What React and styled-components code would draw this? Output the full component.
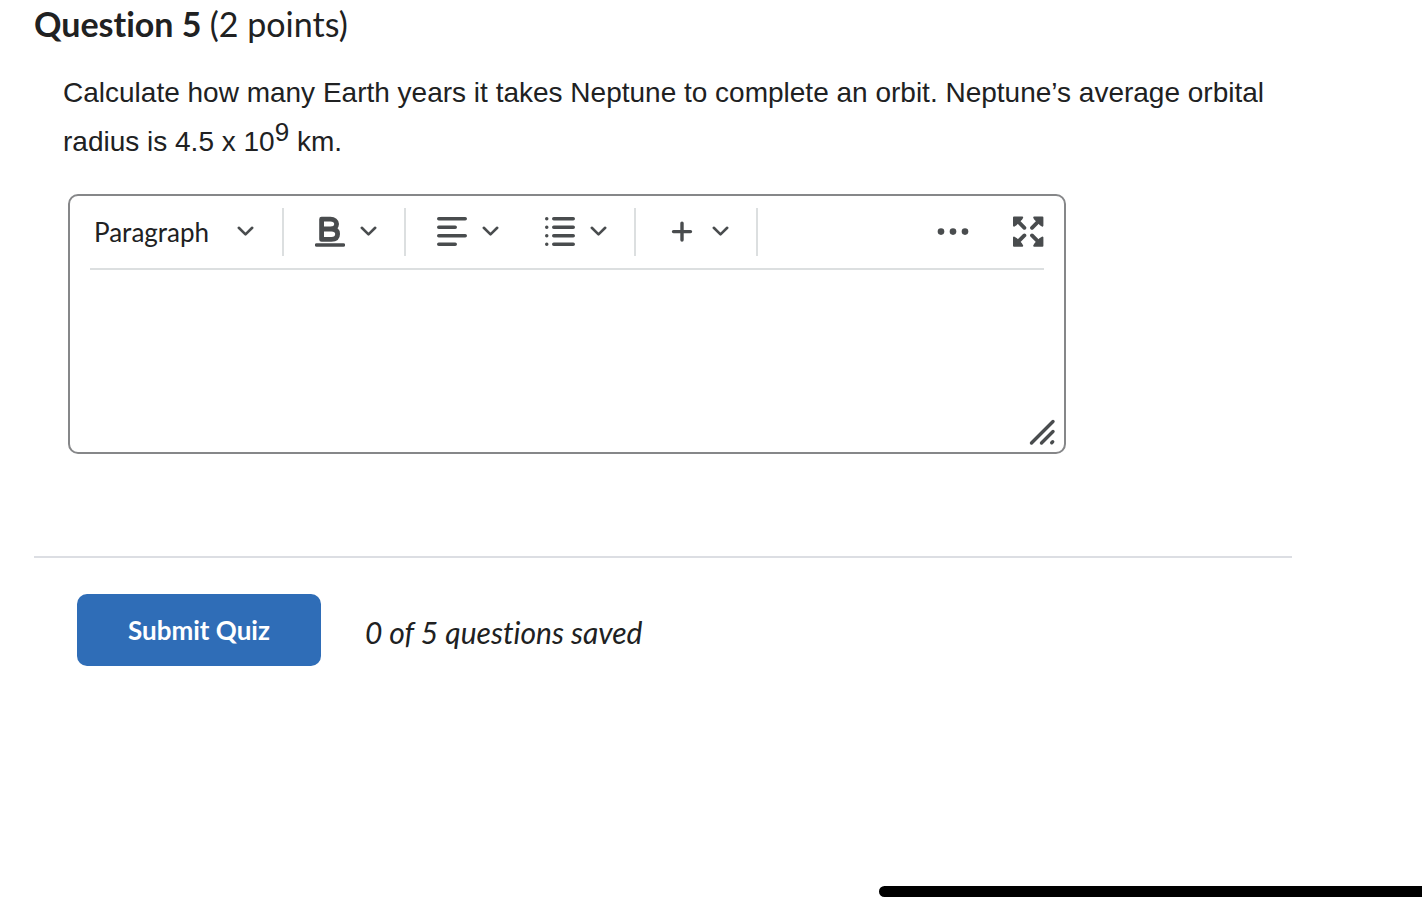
import React, { useState } from 'react';
import styled, { createGlobalStyle } from 'styled-components';

const GlobalStyle = createGlobalStyle`
  *, *::before, *::after {
    box-sizing: border-box;
  }

  body {
    margin: 0;
    background: #fff;
    color: #202122;
    font-family: Lato, sans-serif;
    font-variant-ligatures: none;
  }

  button, select, textarea {
    margin: 0;
    border: none;
    background: none;
    color: inherit;
    font-family: inherit;
  }
`;

const Page = styled.main`
  padding: 0 130px 0 34px;
`;

const QuestionTitle = styled.h2`
  margin: 0;
  font-size: 34px;
  line-height: 48px;
  font-weight: 700;

  span {
    font-weight: 400;
  }
`;

const QuestionBody = styled.section`
  padding: 20px 0 0 29px;
`;

const QuestionText = styled.p`
  margin: 0;
  font-family: "Liberation Sans", Arial, sans-serif;
  font-size: 28px;
  line-height: 49px;

  sup {
    font-size: 26px;
    line-height: 0;
    vertical-align: 10px;
  }
`;

const Editor = styled.div`
  position: relative;
  max-width: 998px;
  margin: 28px 0 0 5px;
  border: 2px solid #868789;
  border-radius: 10px;
`;

const Toolbar = styled.div`
  display: flex;
  align-items: center;
  height: 74px;
  margin: 0 20px;
  border-bottom: 2px solid #dcdfe0;
  color: #494c4e;
`;

const FormatField = styled.label`
  display: grid;
  align-items: center;
  width: 192px;

  select, svg {
    grid-area: 1 / 1;
  }

  svg {
    justify-self: end;
    margin-right: 28px;
    pointer-events: none;
  }
`;

const FormatSelect = styled.select`
  appearance: none;
  width: 100%;
  height: 48px;
  padding: 0 4px;
  color: #202122;
  font-size: 26px;
`;

const ToolGroup = styled.div`
  display: flex;
  align-items: center;
  gap: 46px;
  height: 48px;
  padding: 0 27px 0 31px;
  border-left: 2px solid #dcdfe0;

  &:last-of-type {
    border-right: 2px solid #dcdfe0;
  }
`;

const ToolButton = styled.button`
  display: flex;
  align-items: center;
  gap: 15px;
  padding: 0;
  cursor: pointer;
`;

const ToolbarEnd = styled.nav`
  display: flex;
  gap: 43px;
  margin-left: auto;
`;

const Answer = styled.textarea`
  display: block;
  width: 100%;
  height: 182px;
  padding: 20px;
  border-radius: 10px;
  font-size: 26px;
  line-height: 40px;
  resize: none;
  outline: none;
`;

const ResizeGrip = styled.svg`
  position: absolute;
  right: 8px;
  bottom: 6px;
`;

const Footer = styled.footer`
  display: flex;
  align-items: center;
  gap: 44px;
  margin-top: 102px;
  padding: 36px 43px;
  border-top: 2px solid #dcdee3;
`;

const SubmitButton = styled.button`
  height: 72px;
  padding: 0 51px;
  border-radius: 10px;
  background: #2f6db7;
  color: #fff;
  font-size: 26px;
  font-weight: 700;
  cursor: pointer;
`;

const SavedStatus = styled.em`
  padding-top: 4px;
  font-size: 30px;
  line-height: 36px;
`;

const HomeIndicator = styled.div`
  position: fixed;
  right: 0;
  bottom: 14px;
  width: 543px;
  height: 11px;
  border-radius: 6px 0 0 6px;
  background: #000;
`;

function Icon({ children, width = 30 }) {
  return (
    <svg
      width={width}
      height="32"
      viewBox={`0 0 ${width} 32`}
      fill="none"
      stroke="currentColor"
      strokeWidth="3.6"
      strokeLinecap="round"
      aria-hidden="true"
    >
      {children}
    </svg>
  );
}

function Chevron() {
  return (
    <Icon width={17}>
      <path d="M1.8 11.8L8.5 18.4L15.2 11.8" strokeWidth="2.6" strokeLinejoin="round" />
    </Icon>
  );
}

function BoldIcon() {
  return (
    <Icon>
      <path d="M6.6 3.2V23.4H16.4C20.4 23.4 22.6 21.4 22.6 18.1C22.6 14.9 20.4 13 16.4 13H6.6M6.6 3.2H15.4C19.2 3.2 21.6 5.1 21.6 8.1C21.6 11.1 19.2 13 15.4 13" strokeWidth="4.8" strokeLinejoin="round" />
      <path d="M1.5 29H28.5" strokeWidth="3.4" />
    </Icon>
  );
}

function AlignIcon() {
  return (
    <Icon>
      <path d="M1.8 2.8H28.2M1.8 11.3H18.2M1.8 19.8H28.2M1.8 28.3H18.2" />
    </Icon>
  );
}

function ListIcon() {
  return (
    <Icon>
      <path d="M1.7 2.8H1.8M1.7 11.3H1.8M1.7 19.8H1.8M1.7 28.3H1.8" strokeWidth="3.4" />
      <path d="M8.8 2.8H28.2M8.8 11.3H28.2M8.8 19.8H28.2M8.8 28.3H28.2" />
    </Icon>
  );
}

function PlusIcon() {
  return (
    <Icon>
      <path d="M6.5 15.6H23.5M15 7.1V24.1" strokeWidth="3.4" />
    </Icon>
  );
}

function MoreIcon() {
  return (
    <Icon width={32}>
      <g fill="currentColor" stroke="none">
        <circle cx="4" cy="15.6" r="3.3" />
        <circle cx="16" cy="15.6" r="3.3" />
        <circle cx="28" cy="15.6" r="3.3" />
      </g>
    </Icon>
  );
}

function ExpandIcon() {
  return (
    <Icon width={32}>
      <g fill="currentColor" strokeWidth="2" strokeLinejoin="round">
        <path d="M2 1.4H10.2L9 3.4L4 8.4L2 9.6Z" />
        <path d="M30.4 1.4H22.2L23.4 3.4L28.4 8.4L30.4 9.6Z" />
        <path d="M2 29.8H10.2L9 27.8L4 22.8L2 21.6Z" />
        <path d="M30.4 29.8H22.2L23.4 27.8L28.4 22.8L30.4 21.6Z" />
      </g>
      <path d="M5 4.4L12.4 11.8M27.4 4.4L20 11.8M5 26.8L12.4 19.4M27.4 26.8L20 19.4" strokeWidth="3.8" />
    </Icon>
  );
}

function App() {
  const [answer, setAnswer] = useState('');

  return (
    <>
      <GlobalStyle />
      <Page>
        <QuestionTitle>
          Question 5 <span>(2 points)</span>
        </QuestionTitle>

        <QuestionBody>
          <QuestionText>
            Calculate how many Earth years it takes Neptune to complete an orbit. Neptune’s average
            orbital radius is 4.5 x 10<sup>9</sup> km.
          </QuestionText>

          <Editor>
            <Toolbar role="toolbar" aria-label="Formatting">
              <FormatField>
                <FormatSelect aria-label="Format" defaultValue="p">
                  <option value="p">Paragraph</option>
                </FormatSelect>
                <Chevron />
              </FormatField>
              <ToolGroup>
                <ToolButton type="button" aria-label="Bold">
                  <BoldIcon />
                  <Chevron />
                </ToolButton>
              </ToolGroup>
              <ToolGroup>
                <ToolButton type="button" aria-label="Alignment">
                  <AlignIcon />
                  <Chevron />
                </ToolButton>
                <ToolButton type="button" aria-label="List">
                  <ListIcon />
                  <Chevron />
                </ToolButton>
              </ToolGroup>
              <ToolGroup>
                <ToolButton type="button" aria-label="Insert">
                  <PlusIcon />
                  <Chevron />
                </ToolButton>
              </ToolGroup>
              <ToolbarEnd>
                <ToolButton type="button" aria-label="More actions">
                  <MoreIcon />
                </ToolButton>
                <ToolButton type="button" aria-label="Fullscreen">
                  <ExpandIcon />
                </ToolButton>
              </ToolbarEnd>
            </Toolbar>
            <Answer
              aria-label="Answer to question 5"
              value={answer}
              onChange={(e) => setAnswer(e.target.value)}
            />
            <ResizeGrip width="28" height="28" viewBox="0 0 28 28" stroke="#494c4e" strokeWidth="3.4" strokeLinecap="round" aria-hidden="true">
              <path d="M3.5 25L25 3.5M13.5 25L25 13.5M23.7 24.8L24.7 23.8" />
            </ResizeGrip>
          </Editor>
        </QuestionBody>

        <Footer>
          <SubmitButton type="button">Submit Quiz</SubmitButton>
          <SavedStatus>0 of 5 questions saved</SavedStatus>
        </Footer>
      </Page>
      <HomeIndicator />
    </>
  );
}

export default App;
